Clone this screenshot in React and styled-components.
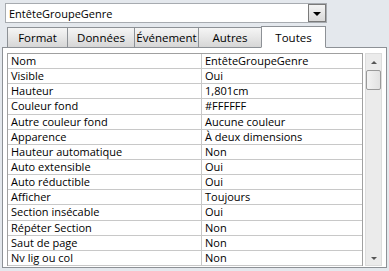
import styled, { createGlobalStyle } from "styled-components";

const GlobalStyle = createGlobalStyle`
  html, body {
    margin: 0;
    padding: 0;
    background: #e4e8ed;
  }
  * {
    box-sizing: border-box;
  }
`;

const Sheet = styled.div`
  width: 389px;
  height: 271px;
  background: #e4e8ed;
  font-family: "Open Sans", "Noto Sans", sans-serif;
  font-size: 11px;
  color: #000;
  padding-top: 3px;
  overflow: hidden;
`;

const Combo = styled.div`
  margin-left: 5px;
  width: 322px;
  height: 20px;
  background: #fff;
  border: 1px solid #a7abb0;
  display: flex;
  align-items: center;
  justify-content: space-between;
`;

const ComboText = styled.span`
  padding-left: 3px;
`;

const DropButton = styled.div`
  width: 18px;
  height: 18px;
  border: 1px solid #7a7a7a;
  background: linear-gradient(#f4f4f4, #d9d9d9);
  display: flex;
  align-items: center;
  justify-content: center;
`;

const Arrow = styled.span`
  width: 0;
  height: 0;
  border-left: 4px solid transparent;
  border-right: 4px solid transparent;
  border-top: 4px solid #000;
  margin-top: 1px;
`;

const TabStrip = styled.div`
  display: flex;
  align-items: flex-end;
  height: 24px;
  padding-left: 7px;
  margin-top: 0;
  position: relative;
  z-index: 1;
`;

const Tab = styled.div`
  width: ${({ $w }) => $w}px;
  height: ${({ $active }) => ($active ? 22 : 20)}px;
  margin-left: -1px;
  border: 1px solid #8d9196;
  border-bottom: ${({ $active }) => ($active ? "1px solid #fff" : "none")};
  background: ${({ $active }) =>
    $active ? "#fff" : "linear-gradient(#f5f5f5 0%, #e8e8e8 45%, #d6d6d6 100%)"};
  margin-bottom: ${({ $active }) => ($active ? "-1px" : "0")};
  display: flex;
  align-items: center;
  justify-content: center;
  font-size: 11.5px;
  &:first-child {
    margin-left: 0;
  }
`;

const Panel = styled.div`
  margin: 0 2px;
  height: 221px;
  background: #fff;
  border: 1px solid #8d9196;
  padding: 5px 4px 1px 4px;
  display: flex;
  gap: 2px;
`;

const Grid = styled.div`
  flex: 1;
  border: 1px solid #a0a0a0;
  border-bottom: none;
  display: flex;
  flex-direction: column;
`;

const Row = styled.div`
  display: grid;
  grid-template-columns: 193px 1fr;
  height: 15.3px;
  border-bottom: 1px solid #c8c8c8;
  line-height: 14px;
`;

const Cell = styled.div`
  padding-left: 3px;
  white-space: nowrap;
  overflow: hidden;
  & + & {
    border-left: 1px solid #c8c8c8;
  }
`;

const Scrollbar = styled.div`
  width: 17px;
  background: #ebebeb;
  border: 1px solid #dcdcdc;
  display: flex;
  flex-direction: column;
  align-items: center;
  padding-top: 2px;
  position: relative;
`;

const ScrollArrow = styled.span`
  width: 0;
  height: 0;
  border-left: 3px solid transparent;
  border-right: 3px solid transparent;
  ${({ $down }) =>
    $down ? "border-top: 3px solid #555;" : "border-bottom: 3px solid #555;"}
  margin: 5px 0;
`;

const Thumb = styled.div`
  width: 15px;
  height: 20px;
  border: 1px solid #9a9a9a;
  border-radius: 2px;
  background: linear-gradient(90deg, #f3f3f3, #e2e2e2);
  margin-top: 1px;
`;

const Spacer = styled.div`
  flex: 1;
`;

const rows = [
  ["Nom", "EntêteGroupeGenre"],
  ["Visible", "Oui"],
  ["Hauteur", "1,801cm"],
  ["Couleur fond", "#FFFFFF"],
  ["Autre couleur fond", "Aucune couleur"],
  ["Apparence", "À deux dimensions"],
  ["Hauteur automatique", "Non"],
  ["Auto extensible", "Oui"],
  ["Auto réductible", "Oui"],
  ["Afficher", "Toujours"],
  ["Section insécable", "Oui"],
  ["Répéter Section", "Non"],
  ["Saut de page", "Non"],
  ["Nv lig ou col", "Non"],
];

const tabs = [
  ["Format", 61],
  ["Données", 68],
  ["Événement", 65],
  ["Autres", 64],
  ["Toutes", 65],
];

export default function App() {
  return (
    <>
      <GlobalStyle />
      <Sheet>
        <Combo>
          <ComboText>EntêteGroupeGenre</ComboText>
          <DropButton>
            <Arrow />
          </DropButton>
        </Combo>
        <TabStrip>
          {tabs.map(([label, w]) => (
            <Tab key={label} $w={w} $active={label === "Toutes"}>
              {label}
            </Tab>
          ))}
        </TabStrip>
        <Panel>
          <Grid>
            {rows.map(([name, value]) => (
              <Row key={name}>
                <Cell>{name}</Cell>
                <Cell>{value}</Cell>
              </Row>
            ))}
          </Grid>
          <Scrollbar>
            <ScrollArrow />
            <Thumb />
            <Spacer />
            <ScrollArrow $down />
          </Scrollbar>
        </Panel>
      </Sheet>
    </>
  );
}
